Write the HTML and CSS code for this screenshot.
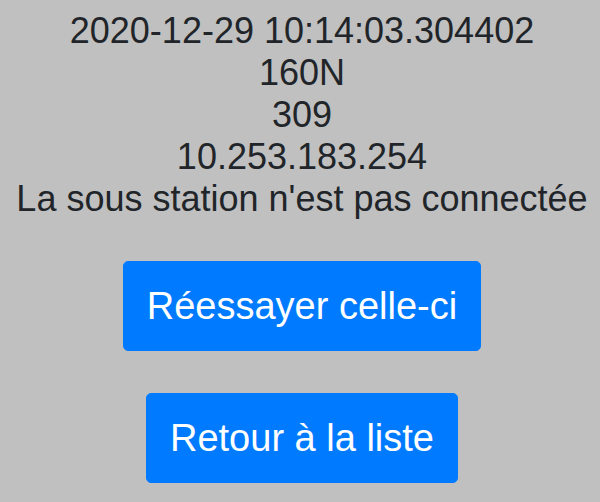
FILE: index.html
```html
<!DOCTYPE html>
<html lang="fr">
<head>
<meta charset="utf-8">
<link rel="stylesheet" href="styles.css">
</head>
<body>
<main class="page">
  <div class="info">
    <div class="line">2020-12-29 10:14:03.304402</div>
    <div class="line">160N</div>
    <div class="line">309</div>
    <div class="line">10.253.183.254</div>
    <div class="line">La sous station n'est pas connectée</div>
  </div>
  <div class="actions">
    <button class="btn" type="button">Réessayer celle-ci</button>
    <button class="btn" type="button">Retour à la liste</button>
  </div>
</main>
</body>
</html>
```
FILE: styles.css
```css
html, body {
  margin: 0;
  padding: 0;
  background: #c0c0c0;
}
body {
  font-family: "Liberation Sans", Arial, sans-serif;
  font-size: 36px;
  color: #212529;
}
.page {
  padding: 10px 8px 0 12px;
  display: flex;
  flex-direction: column;
  align-items: center;
  text-align: center;
}
.info {
  display: flex;
  flex-direction: column;
  align-items: center;
}
.line {
  line-height: normal;
  white-space: nowrap;
}
.actions {
  margin-top: 41px;
  display: flex;
  flex-direction: column;
  align-items: center;
  gap: 42px;
}
.btn {
  font-family: "Liberation Sans", Arial, sans-serif;
  font-size: 38px;
  line-height: 56px;
  color: #ffffff;
  background: #007bff;
  border: 1px solid #007bff;
  border-radius: 5px;
  padding: 16px 23px;
  margin: 0;
}
```
